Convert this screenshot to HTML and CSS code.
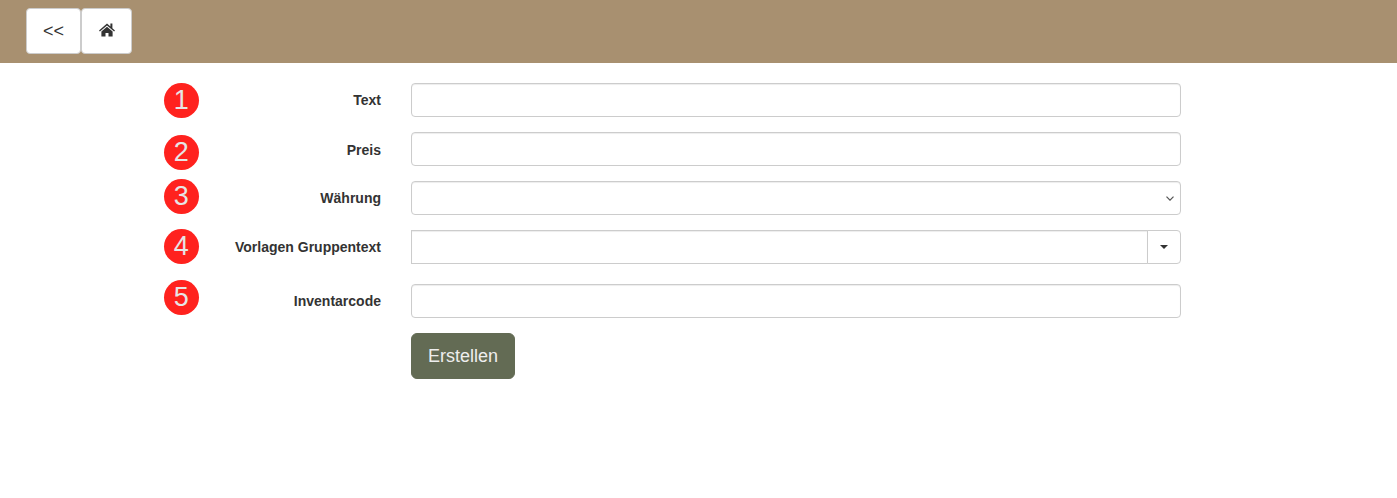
FILE: index.html
```html
<!DOCTYPE html>
<html lang="de">
<head>
<meta charset="utf-8">
<title>Erstellen</title>
<link rel="stylesheet" href="styles.css">
</head>
<body>
<header class="topbar">
  <button class="nav-btn nav-back" type="button">&lt;&lt;</button>
  <button class="nav-btn nav-home" type="button" aria-label="Home">
    <svg class="home-icon" viewBox="0 0 16 14" width="16" height="14"><path fill="#333" d="M8 .6 0 7.4l.9 1.1L8 2.5l7.1 6 .9-1.1-2.6-2.2V.4h-2v3.1L8 .6Zm0 3.2L2.4 8.5v5.1h4.1V9.9h3v3.7h4.1V8.5L8 3.8Z"/></svg>
  </button>
</header>
<form class="form">
  <div class="row row-1">
    <span class="badge badge-1">1</span>
    <label class="label">Text</label>
    <input class="control" type="text">
  </div>
  <div class="row row-2">
    <span class="badge badge-2">2</span>
    <label class="label label-low">Preis</label>
    <input class="control" type="text">
  </div>
  <div class="row row-3">
    <span class="badge badge-3">3</span>
    <label class="label">Währung</label>
    <select class="control select"><option></option></select>
  </div>
  <div class="row row-4">
    <span class="badge badge-4">4</span>
    <label class="label">Vorlagen Gruppentext</label>
    <div class="combo">
      <input class="combo-input" type="text">
      <button class="combo-btn" type="button" aria-label="Auswahl"><span class="caret"></span></button>
    </div>
  </div>
  <div class="row row-5">
    <span class="badge badge-5">5</span>
    <label class="label">Inventarcode</label>
    <input class="control" type="text">
  </div>
  <div class="row-submit">
    <button class="submit" type="button">Erstellen</button>
  </div>
</form>
</body>
</html>
```
FILE: styles.css
```css
* { box-sizing: border-box; }
html, body { margin: 0; padding: 0; }
body {
  background: #fff;
  color: #333;
  font-family: "Liberation Sans", Arial, sans-serif;
  font-size: 14px;
  height: 498px;
  overflow: hidden;
}
.topbar {
  background: #a89070;
  height: 63px;
  padding: 8px 0 0 26px;
  display: flex;
  align-items: flex-start;
}
.nav-btn {
  height: 46px;
  background: #fff;
  border: 1px solid #ccc;
  border-radius: 4px;
  color: #333;
  font-family: inherit;
  font-size: 18px;
  padding: 0;
  display: flex;
  align-items: center;
  justify-content: center;
}
.nav-back { width: 55px; }
.nav-home { width: 51px; }
.home-icon { margin: -2px 0 0 0; }
.form {
  padding: 20px 0 0 164px;
  width: 1181px;
}
.row {
  display: flex;
  align-items: center;
  height: 34px;
}
.row-1 { margin-bottom: 15px; }
.row-2 { margin-bottom: 15px; }
.row-3 { margin-bottom: 15px; }
.row-4 { margin-bottom: 20px; }
.row-5 { margin-bottom: 15px; }
.badge {
  flex: none;
  width: 34.5px;
  height: 35px;
  border-radius: 50%;
  background: #ff221e;
  color: #e6e6e6;
  font-size: 27px;
  line-height: 35px;
  text-align: center;
  align-self: flex-start;
}
.badge-1 { margin-top: 0; }
.badge-2 { margin-top: 3px; }
.badge-3 { margin-top: -2px; }
.badge-4 { margin-top: -1px; }
.badge-5 { margin-top: -4px; }
.label {
  flex: none;
  width: 182.5px;
  text-align: right;
  font-weight: 700;
  font-size: 14px;
  margin-right: 30px;
}
.label-low { padding-top: 2px; }
.control {
  flex: 1;
  min-width: 0;
  height: 34px;
  border: 1px solid #ccc;
  border-radius: 4px;
  background: #fff;
  box-shadow: inset 0 1px 1px rgba(0, 0, 0, .075);
  padding: 6px 12px;
  font-family: inherit;
  font-size: 14px;
  color: #555;
}
.select {
  appearance: none;
  background: #fff url("data:image/svg+xml,%3Csvg xmlns='http://www.w3.org/2000/svg' width='8' height='5'%3E%3Cpath d='M.5.7 4 4.2 7.5.7' fill='none' stroke='%23555' stroke-width='1.2'/%3E%3C/svg%3E") no-repeat right 6px center;
}
.combo {
  flex: 1;
  min-width: 0;
  display: flex;
  height: 34px;
}
.combo-input {
  flex: 1;
  min-width: 0;
  height: 34px;
  border: 1px solid #ccc;
  border-radius: 0;
  box-shadow: inset 0 1px 1px rgba(0, 0, 0, .075);
  padding: 6px 12px;
}
.combo-btn {
  flex: none;
  width: 34px;
  height: 34px;
  margin-left: -1px;
  background: #fff;
  border: 1px solid #ccc;
  border-radius: 0 4px 4px 0;
  padding: 0;
  display: flex;
  align-items: center;
  justify-content: center;
}
.caret {
  width: 0;
  height: 0;
  border-top: 4px solid #333;
  border-left: 4px solid transparent;
  border-right: 4px solid transparent;
}
.row-submit { padding-left: 247px; }
.submit {
  width: 104px;
  height: 46px;
  background: #636b54;
  border: 1px solid #636b54;
  border-radius: 6px;
  color: #eee;
  font-family: inherit;
  font-size: 18px;
  padding: 0;
}
```
